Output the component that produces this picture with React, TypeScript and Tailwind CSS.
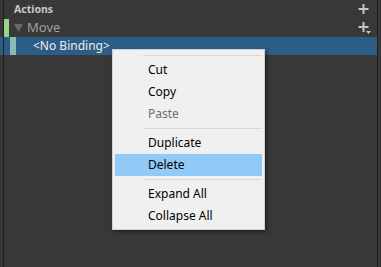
import React from "react";

const Plus = ({ drop }: { drop?: boolean }) => (
  <svg width="14" height="14" viewBox="0 0 14 14" className="block">
    <rect x="5.5" y="1" width="2" height="10" fill="#c4c4c4" />
    <rect x="1.5" y="5" width="10" height="2" fill="#c4c4c4" />
    {drop && <polygon points="9,10 14,10 11.5,13" fill="#c4c4c4" />}
  </svg>
);

const Item = ({ label, disabled, active }: { label: string; disabled?: boolean; active?: boolean }) => (
  <div
    className={`h-[22px] flex items-center pl-[33px] mx-[2px] ${active ? "bg-[#91c9f7]" : ""} ${
      disabled ? "text-[#6d6d6d]" : "text-black"
    }`}
  >
    {label}
  </div>
);

const Sep = () => (
  <div className="h-[7px] flex items-center pl-[30px] pr-[2px]">
    <div className="h-px w-full bg-[#d7d7d7]" />
  </div>
);

export default function App() {
  return (
    <div
      className="relative w-[381px] h-[267px] bg-[#383838] overflow-hidden"
      style={{ fontFamily: '"Noto Sans", "Open Sans", sans-serif' }}
    >
      <div className="absolute left-[3px] top-0 bottom-0 w-px bg-[#1f1f1f]" />
      <div className="absolute left-[377px] top-0 bottom-0 w-px bg-[#1f1f1f]" />
      <div className="flex flex-col">
        <div className="h-[19px] flex items-center pl-[14px] pr-[10px] justify-between">
          <span className="text-[10.5px] font-bold text-[#c8c8c8]">Actions</span>
          <Plus />
        </div>
        <div className="h-[18px] flex items-center pr-[10px]">
          <div className="ml-[4px] w-[5px] h-[18px] bg-[#98d48e]" />
          <svg width="9" height="8" viewBox="0 0 9 8" className="ml-[5px]">
            <polygon points="0,0 9,0 4.5,8" fill="#6a6a6a" />
          </svg>
          <span className="ml-[4px] text-[13px] text-[#a0a0a0]">Move</span>
          <div className="ml-auto">
            <Plus drop />
          </div>
        </div>
        <div className="h-[18px] flex items-center bg-[#2c5d87] w-[377px]">
          <div className="ml-[10px] w-[6px] h-[18px] bg-[#8bbab8]" />
          <span className="ml-[17px] text-[12px] text-[#eeeeee]">&lt;No Binding&gt;</span>
        </div>
      </div>
      <div className="absolute left-[112px] top-[49px] w-[153px] bg-[#f0f0f0] border border-[#d0d0d0] shadow-[2px_2px_4px_rgba(0,0,0,0.4)] text-[12px] pt-[2px] pb-[2px]">
        <Sep />
        <Item label="Cut" />
        <Item label="Copy" />
        <Item label="Paste" disabled />
        <Sep />
        <Item label="Duplicate" />
        <Item label="Delete" active />
        <Sep />
        <Item label="Expand All" />
        <Item label="Collapse All" />
      </div>
    </div>
  );
}
